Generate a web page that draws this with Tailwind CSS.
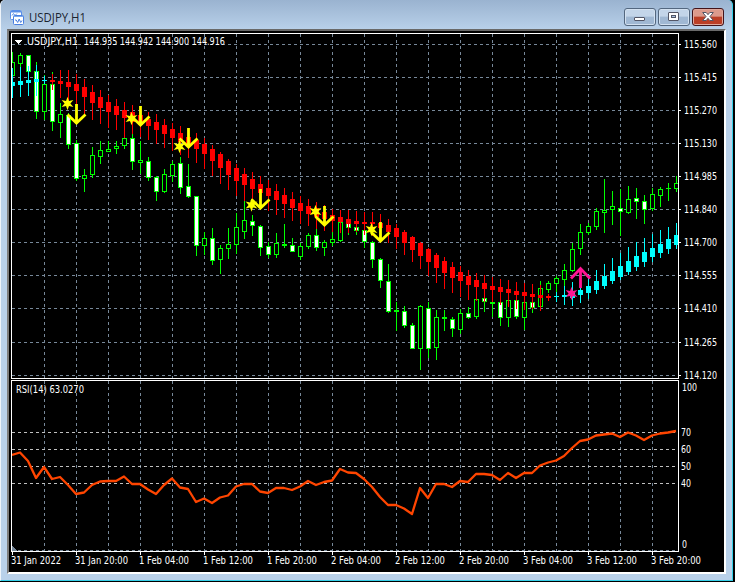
<!DOCTYPE html>
<html lang="en">
<head>
    <meta charset="UTF-8">
    <meta name="viewport" content="width=device-width, initial-scale=1.0">
    <title>USDJPY,H1</title>
    <script src="https://cdn.jsdelivr.net/npm/@tailwindcss/browser@4"></script>
</head>
<body class="bg-white overflow-hidden">
    <div class="w-[735px] h-[582px] bg-black pr-0.5 pb-px">
        <div class="w-[733px] h-[581px] border-r border-b border-[#35cfe8] border-l border-l-[#eef4fa] rounded-tl-[5px] rounded-tr-[5px] bg-[#b9d1ea] bg-linear-to-b from-[#9ab3d0] to-[#b9d1ea] to-[30px] flex flex-col">
            <!-- Title bar -->
            <header class="h-[29px] shrink-0 flex items-center justify-between pl-[9px] pr-[8px] pt-[5px]">
                <div class="flex items-center gap-[5px]">
                    <svg class="w-[14px] h-[15px]" viewBox="0 0 14 15">
                        <rect x="0.5" y="0.5" width="11" height="9" rx="1" fill="#fff" stroke="#5b8fe8"/>
                        <path d="M1 1h10v1.5H1z" fill="#5b8fe8"/>
                        <path d="M2 5.5l1.5-2 1.5 2 2-2" fill="none" stroke="#5b8fe8"/>
                        <rect x="3.5" y="5.5" width="10" height="9" rx="1" fill="#fff" stroke="#4a80e0"/>
                        <path d="M4 6h9v1H4z" fill="#7aa8f0"/>
                        <path d="M5 10h1.200l1.500 2.500 1.500-3.500 1.500 3.500L12 10.500" fill="none" stroke="#4a80e0"/>
                    </svg>
                    <svg class="w-[60px] h-[18px]" viewBox="0 0 60 18">
                        <text x="0" y="14" font-size="12.3" textLength="57" lengthAdjust="spacingAndGlyphs" fill="#1b2430" class="font-['Open_Sans',sans-serif]">USDJPY,H1</text>
                    </svg>
                </div>
                <div class="flex gap-[2px]">
                    <button class="w-8 h-[18px] rounded-[3px] border border-[#53677f] bg-linear-to-b from-[#c3d5e9] from-45% to-[#a0b8d3] to-50% shadow-[inset_0_0_0_1px_#d3e1f0] flex items-center justify-center">
                        <svg class="w-3 h-3" viewBox="0 0 12 12"><rect x="0.5" y="6.5" width="10" height="3" rx="0.5" fill="#fff" stroke="#535666"/></svg>
                    </button>
                    <button class="w-8 h-[18px] rounded-[3px] border border-[#53677f] bg-linear-to-b from-[#c3d5e9] from-45% to-[#a0b8d3] to-50% shadow-[inset_0_0_0_1px_#d3e1f0] flex items-center justify-center">
                        <svg class="w-3 h-3" viewBox="0 0 12 12"><rect x="0.5" y="1.5" width="10" height="8" rx="0.5" fill="#fff" stroke="#535666"/><rect x="3.5" y="4.5" width="4" height="2" fill="#a9c4e4" stroke="#535666"/></svg>
                    </button>
                    <button class="w-8 h-[18px] rounded-[3px] border border-[#43141a] bg-linear-to-b from-[#dc9a8c] from-45% to-[#bb3e26] to-50% shadow-[inset_0_0_0_1px_#e0a99d] flex items-center justify-center">
                        <svg class="w-3 h-3" viewBox="0 0 12 12"><path d="M0.700 1.500h3.500L6 3.700l1.800-2.200h3.500L8 5.500l3.300 4H7.800L6 7.300 4.200 9.500H0.700l3.300-4z" fill="#fff" stroke="#535666"/></svg>
                    </button>
                </div>
            </header>

            <!-- Chart window -->
            <main class="ml-[6px] w-[719px] h-[545px] bg-black border-2 border-t-[#696969] border-l-[#7d7d7d] border-r-white border-b-white">
                <svg id="chart" class="block w-[715px] h-[541px] font-['DejaVu_Sans_Condensed','DejaVu_Sans',sans-serif]" viewBox="9 31 715 541" shape-rendering="crispEdges">
                    <defs>
                        <clipPath id="plot"><rect x="12" y="34" width="666" height="517"/></clipPath>
                    </defs>
                    <g id="grid" stroke="#778899" stroke-dasharray="3 3"></g>
                    <g id="bars" clip-path="url(#plot)"></g>
                    <g id="signals" shape-rendering="auto"></g>
                    <polyline id="rsi" fill="none" stroke="#ff4500" stroke-width="2.300" stroke-linejoin="round" shape-rendering="auto" clip-path="url(#plot)"/>
                    <path d="M11.5 378.5V33.5H678.5V378.5ZM11.5 551.5V380.5H678.5V551.5Z" fill="none" stroke="#fff"/>
                    <path d="M12 546l5 5h-5z" fill="#778899"/>
                    <path d="M15 40h7l-3.500 4z" fill="#fff"/>
                    <g id="labels" fill="#fff" font-size="10" shape-rendering="auto"></g>
                </svg>
            </main>
        </div>
    </div>

    <script>
        const FIRST_X = 12, STEP = 8;

        // Price bars: [u = rising / d = falling, body top, body bottom, high, low]
        const prices = [
            ['u',62,75,52,76],['u',55,63,53,66],['d',55,71,55,73],['d',71,111,62,118],['u',84,111,75,119],
            ['d',84,121,72,130],['u',114,122,103,137],['d',115,144,113,148],['d',143,178,140,180],['u',175,178,169,191],
            ['u',155,174,147,177],['u',150,156,141,163],['u',149,151,141,151],['u',146,148,141,153],['u',138,145,132,148],
            ['d',138,161,133,169],['u',160,162,141,173],['d',161,177,157,180],['d',177,191,176,200],['u',174,191,169,192],
            ['u',164,175,161,181],['d',163,187,157,193],['d',186,196,164,197],['d',196,245,196,255],['u',238,245,232,254],
            ['d',238,260,228,264],['u',248,259,245,273],['u',244,248,228,258],['u',227,244,213,253],['u',220,231,200,238],
            ['d',221,225,215,235],['d',226,247,225,255],['d',246,254,242,257],['u',243,254,233,257],['u',244,245,224,247],
            ['d',245,251,238,251],['u',246,256,243,259],['u',235,246,233,248],['d',235,247,229,250],['u',242,247,240,255],
            ['u',239,242,232,245],['u',222,240,220,241],['d',222,227,215,234],['d',227,230,221,234],['d',230,241,228,247],
            ['d',242,259,241,267],['d',259,280,258,287],['d',281,311,264,312],['u',310,311,302,330],['d',311,325,306,327],
            ['d',325,348,323,348],['u',306,348,305,369],['d',308,348,302,357],['u',317,347,310,359],['u',317,318,310,330],
            ['d',319,328,317,336],['u',313,329,309,333],['d',313,317,307,318],['u',299,316,297,318],['d',298,301,298,311],
            ['u',302,303,302,316],['d',302,317,302,325],['u',300,317,298,326],['d',300,316,300,318],['u',302,317,300,329],
            ['d',302,307,302,312],['u',288,306,281,307],['u',283,289,281,292],['u',278,283,276,291],['u',270,279,264,296],
            ['u',249,270,243,271],['u',232,248,224,254],['u',226,232,223,234],['u',211,226,208,229],['u',210,212,179,232],
            ['u',206,209,191,224],['d',208,211,189,235],['u',199,212,186,213],['d',198,201,188,218],['d',201,209,195,223],
            ['u',194,208,188,210],['u',189,195,187,206],['u',188,188,183,200],['u',183,188,176,191]
        ];

        // Smoothed trend bars: [body top, body bottom, high, low]
        const trend = [
            [82,85,68,97],[81,84,67,96],[80,82,66,95],[79,81,65,95],[80,80,76,83],[80,81,74,89],[81,83,70,97],
            [82,86,70,101],[84,90,74,107],[87,96,79,113],[92,102,85,119],[97,107,90,123],[102,111,95,127],[106,114,99,129],
            [110,117,102,137],[112,121,105,133],[115,124,108,136],[119,125,112,139],[122,129,114,143],[125,133,119,147],
            [129,137,123,150],[133,141,126,154],[137,144,129,157],[140,148,133,162],[144,153,138,168],[149,160,145,175],
            [154,167,152,183],[161,174,159,189],[168,180,164,195],[174,184,168,200],[179,188,172,204],[184,192,176,208],
            [188,195,180,210],[191,199,184,214],[195,203,188,217],[199,207,192,220],[203,210,196,223],[206,213,199,225],
            [208,216,202,228],[212,218,205,230],[215,220,209,231],[217,221,210,232],[219,223,210,232],[221,223,211,231],
            [222,223,212,234],[222,223,212,235],[223,227,214,237],[225,231,219,242],[228,236,224,248],[232,242,230,254],
            [237,249,236,261],[243,255,242,268],[249,261,248,275],[255,267,253,282],[261,272,257,288],[267,277,262,292],
            [272,280,266,296],[276,284,270,299],[280,286,273,300],[283,288,275,301],[286,289,277,301],[287,291,279,304],
            [289,292,280,306],[291,294,282,308],[292,295,283,309],[294,296,284,308],[295,297,285,310],[296,297,294,300],
            [296,296,292,301],[295,296,286,304],[293,297,282,305],[290,294,278,302],[286,292,274,298],[281,289,270,293],
            [276,285,264,288],[271,280,258,283],[266,276,253,279],[261,271,247,274],[256,266,242,270],[252,261,238,266],
            [248,256,234,261],[244,252,230,257],[239,248,227,253],[235,244,223,248]
        ];

        const rsi = [
            455,452.5,461,478,467,479,477,485,494,492.5,485,481.5,481,481,476.5,484,484,489.5,494,485,478.5,
            487.5,489,502,498.5,503,497.5,495.5,486.5,484,484,491.5,493,488,488,490,486.5,481,485,482,480.5,
            469,472.5,473,479,487,497,505,505,508.5,514,488,498,484,484,487,481,482,474,474,475,480,473,478,
            473,473,465.5,462.5,460.5,456,448,441,439.5,435.5,434.5,433.5,437,432.5,435.5,440,435.5,433.5,432.5,431
        ];

        const rect = (x, y, w, h, fill) => `<rect x="${x}" y="${y}" width="${w}" height="${h}" fill="${fill}"/>`;

        // Grid
        let grid = '';
        const priceY = [44, 77, 110, 143, 176, 209, 242, 275, 308, 342, 375];
        for (let x = 44; x < 678; x += 32) {
            grid += `<path d="M${x}.5 34V378M${x}.5 381V551"/>`;
        }
        priceY.forEach(y => { grid += `<path d="M12 ${y}.5H678"/>`; });
        [432, 449, 466, 483].forEach(y => { grid += `<path stroke="#c0c0c0" d="M12 ${y}.5H678"/>`; });
        grid += '<path d="M12 550.5H678"/>';
        document.getElementById('grid').innerHTML = grid;

        // Price bars first, trend bars over them
        let bars = '';
        prices.forEach(([kind, top, bottom, high, low], i) => {
            const x = FIRST_X + STEP * i;
            bars += rect(x, high, 1, low - high + 1, '#00ff00');
            bars += rect(x - 2, top, 5, bottom - top + 1, '#00ff00');
            if (bottom - top > 1) {
                bars += rect(x - 1, top + 1, 3, bottom - top - 1, kind === 'u' ? '#000' : '#fff');
            }
        });
        trend.forEach(([top, bottom, high, low], i) => {
            const x = FIRST_X + STEP * i;
            const fill = i < 5 || i > 67 ? '#00ffff' : '#ff0000';
            bars += rect(x, high, 1, low - high + 1, fill) + rect(x - 2, top, 5, bottom - top + 1, fill);
        });
        document.getElementById('bars').innerHTML = bars;

        // Buy and sell signals
        const star = (cx, cy, fill) => {
            let pts = '';
            for (let k = 0; k < 12; k++) {
                const r = k % 2 ? 2.9 : 6.8;
                const a = Math.PI * k / 6;
                pts += `${cx + r * Math.sin(a)},${cy - r * Math.cos(a)} `;
            }
            return `<polygon points="${pts}" fill="${fill}"/>`;
        };
        let signals = '';
        [[67.5, 103.5, 76, 104], [131.5, 118.5, 140, 106], [179.5, 146.5, 188, 128], [251.5, 205, 260, 189], [315.5, 211.5, 324, 206], [371.5, 229.5, 380, 222]].forEach(([sx, sy, ax, ay]) => {
            signals += star(sx, sy, '#ffff00');
            signals += `<path d="M${ax + 0.5} ${ay}v19M${ax - 8.5} ${ay + 10.5}l9 8.5 9-8.5" fill="none" stroke="#ffff00" stroke-width="2.8"/>`;
        });
        signals += star(571.5, 293.5, '#ff1493');
        signals += '<path d="M580.5 288V268M571 278.5l9.5-10 9.500 10" fill="none" stroke="#ff1493" stroke-width="2.8"/>';
        document.getElementById('signals').innerHTML = signals;

        document.getElementById('rsi').setAttribute('points', rsi.map((y, i) => `${FIRST_X + STEP * i},${y}`).join(' '));

        // Axis ticks and labels
        let labels = '';
        const text = (x, y, w, s) => {
            labels += `<text x="${x}" y="${y}" textLength="${w}" lengthAdjust="spacingAndGlyphs">${s}</text>`;
        };
        ['115.560', '115.415', '115.270', '115.130', '114.985', '114.840', '114.700', '114.555', '114.410', '114.265', '114.120'].forEach((s, i) => {
            labels += rect(679, priceY[i], 2, 1, '#fff');
            text(684, priceY[i] + 4, 33, s);
        });
        text(682, 391, 15, '100');
        [['70', 432], ['60', 449], ['50', 466], ['40', 483]].forEach(([s, y]) => text(681, y + 4, 10, s));
        text(682, 548, 5, '0');
        ['31 Jan 2022', '31 Jan 20:00', '1 Feb 04:00', '1 Feb 12:00', '1 Feb 20:00', '2 Feb 04:00', '2 Feb 12:00', '2 Feb 20:00', '3 Feb 04:00', '3 Feb 12:00', '3 Feb 20:00'].forEach((s, i) => {
            labels += rect(12 + 64 * i, 552, 1, 3, '#fff');
            text(11 + 64 * i, 564, i === 1 ? 53 : 50, s);
        });
        text(27, 45, 51, 'USDJPY,H1');
        text(84, 45, 141, '144.935 144.942 144.900 144.916');
        text(16, 393, 68, 'RSI(14) 63.0270');
        document.getElementById('labels').innerHTML = labels;
    </script>
</body>
</html>
